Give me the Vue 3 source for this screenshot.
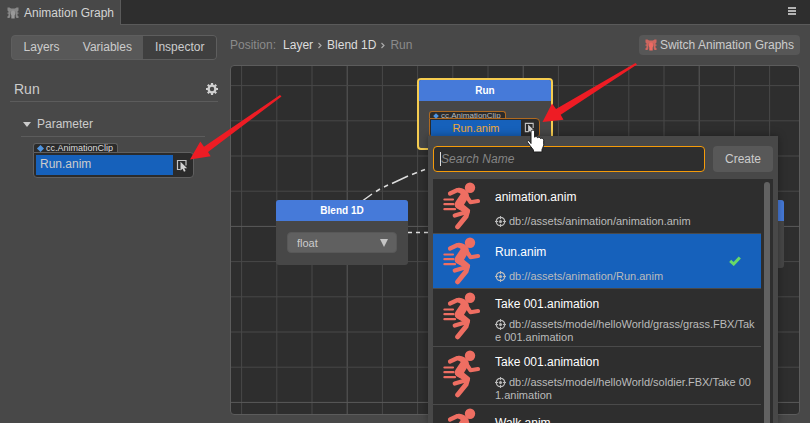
<script setup>
import { ref } from 'vue'

const tabs = ['Layers', 'Variables', 'Inspector']
const activeTab = ref('Inspector')
const search = ref('')
const param = ref('float')
const selected = ref(1)

const assets = [
  { name: 'animation.anim', path: 'db://assets/animation/animation.anim' },
  { name: 'Run.anim', path: 'db://assets/animation/Run.anim' },
  { name: 'Take 001.animation', path: 'db://assets/model/helloWorld/grass/grass.FBX/Take 001.animation' },
  { name: 'Take 001.animation', path: 'db://assets/model/helloWorld/soldier.FBX/Take 001.animation' },
  { name: 'Walk.anim', path: '' },
]

const STEP = 35.2
const columns = Array.from({ length: 60 }, (_, i) => ({ at: 10.6 + i * STEP, major: i % 5 === 3 }))
const rows = Array.from({ length: 40 }, (_, i) => ({ at: 19.6 + i * STEP, major: i % 5 === 4 }))
</script>

<template>
  <div class="panel">
    <svg class="defs" width="0" height="0" aria-hidden="true">
      <symbol id="graph-icon" viewBox="0 0 12 12">
        <path d="M.5 .5h2l1.500 1h4l1.500-1h2v3l-1 1v1h1v1.200h-1v1.800l1 .8v1.700h-2l-.8-1.500V6L8 4H4L3.300 6v3.500L2.500 11h-2V9.300l1-.8V6.700h-1V5.500h1v-1l-1-1z" fill="currentColor" opacity=".8" />
        <circle cx="6" cy="6" r="2.500" fill="currentColor" />
        <path d="M4.300 7.500h3.400V11.500H4.300z" fill="currentColor" />
      </symbol>
      <symbol id="picker" viewBox="0 0 12 13">
        <path d="M4.500 10.500H1.500V1.500h8.500v5" fill="none" stroke="#c4c4c4" stroke-width="1.200" />
        <path d="M4.500 2.800v8.700l2-1.700 1.500 3 1.600-.8-1.400-2.800h3z" fill="#d2d2d2" />
      </symbol>
      <symbol id="runner" viewBox="0 0 38 48">
        <circle cx="27" cy="5.800" r="5.200" fill="#ee6e62" />
        <g fill="none" stroke="#ee6e62" stroke-linecap="round" stroke-linejoin="round">
          <path d="M7 11.500L14.500 8l6 2.500" stroke-width="4.200" />
          <path d="M23 13.500l4.500 6.700 7.500-1.200" stroke-width="4.200" />
          <path d="M15 23.500l9.500 6-1.500 5L14.700 44.800" stroke-width="5" />
          <path d="M22 30.500l-10.200 3" stroke-width="4.400" />
          <path d="M1.400 17.500H10M1.400 22.200H10.500M1.400 27.200H12" stroke-width="2.200" />
        </g>
        <path d="M14.500 6c4-1 8.500 1.500 10.500 4.500 1.500 2.600 1 5-1 7.300l-3 5 5.500 4.500c2 2-1 4.500-3 4.500l-10-5.500c-2.300-2-2.300-4.500-.8-6.800l5-7.500z" fill="#ee6e62" />
      </symbol>
    </svg>

    <header class="titlebar">
      <div class="title-tab">
        <svg class="icon12"><use href="#graph-icon" /></svg>
        <span>Animation Graph</span>
      </div>
      <div class="title-rest">
        <button class="menu" aria-label="Panel menu">
          <svg width="8" height="8" viewBox="0 0 8 8"><path d="M0 1h8M0 4h8M0 7h8" stroke="#b4b4b4" stroke-width="2" /></svg>
        </button>
      </div>
    </header>

    <div class="body">
      <aside class="side">
        <nav class="segments">
          <button v-for="t in tabs" :key="t" :class="{ active: t === activeTab }" @click="activeTab = t">{{ t }}</button>
        </nav>
        <div class="side-title">
          <span>Run</span>
          <button class="gear" aria-label="Settings">
            <svg width="12" height="12" viewBox="0 0 12 12">
              <circle cx="6" cy="6" r="3.400" fill="none" stroke="#d0d0d0" stroke-width="2.300" />
              <path d="M6 0v2M6 10v2M0 6h2M10 6h2M1.800 1.800l1.400 1.400M8.800 8.800l1.400 1.400M1.800 10.200l1.400-1.400M8.800 3.200l1.400-1.400" stroke="#d0d0d0" stroke-width="2.200" />
            </svg>
          </button>
        </div>
        <section class="group">
          <h2>
            <svg width="8" height="5" viewBox="0 0 8 5"><path d="M0 0h8L4 5z" fill="#ccc" /></svg>
            Parameter
          </h2>
          <div class="asset">
            <span class="tag"><i></i>cc.AnimationClip</span>
            <div class="slot">
              <button class="value">Run.anim</button>
              <button class="pick" aria-label="Pick asset"><svg width="12" height="13"><use href="#picker" /></svg></button>
            </div>
          </div>
        </section>
      </aside>

      <main class="main">
        <div class="toolbar">
          <nav class="crumbs">
            <span class="dim">Position:</span>
            <a href="#layer">Layer</a>
            <svg width="4" height="8" viewBox="0 0 4 8"><path d="M.5 2l2.500 2.500L.5 7" fill="none" stroke="#aaa" stroke-width="1.200" /></svg>
            <a href="#blend">Blend 1D</a>
            <svg width="4" height="8" viewBox="0 0 4 8"><path d="M.5 2l2.500 2.500L.5 7" fill="none" stroke="#aaa" stroke-width="1.200" /></svg>
            <span class="dim">Run</span>
          </nav>
          <button class="switch">
            <svg class="icon12"><use href="#graph-icon" /></svg>
            Switch Animation Graphs
          </button>
        </div>

        <div class="canvas">
          <svg class="grid" aria-hidden="true">
            <line v-for="c in columns" :key="'c' + c.at" :x1="c.at" :x2="c.at" y1="0" y2="100%" :class="{ major: c.major }" />
            <line v-for="r in rows" :key="'r' + r.at" :y1="r.at" :y2="r.at" x1="0" x2="100%" :class="{ major: r.major }" />
            <path class="wire" d="M132 134.500l9-6.500M145 125.500l4-2.500M153 121l4-2M161 117.500l16-7.500M181 108.500l5-2M190 105l4-1.500" />
            <path class="wire" d="M177 166.500h4M185 166.500h4M193 166.500h6" />
          </svg>

          <article class="node blend">
            <h3>Blend 1D</h3>
            <div class="select">
              <select v-model="param" aria-label="Blend parameter"><option>float</option></select>
              <svg width="8" height="8" viewBox="0 0 8 8"><path d="M0 0h8L4 8z" fill="#c4c4c4" /></svg>
            </div>
          </article>

          <article class="node far"><h3></h3></article>

          <article class="node run">
            <h3>Run</h3>
            <div class="asset focused">
              <span class="tag"><i></i>cc.AnimationClip</span>
              <div class="slot">
                <button class="value">Run.anim</button>
                <button class="pick" aria-label="Pick clip"><svg width="11" height="12" viewBox="0 0 12 13"><use href="#picker" /></svg></button>
              </div>
            </div>
          </article>
        </div>
      </main>
    </div>

    <div class="popup">
      <div class="searchbar">
        <input v-model="search" type="text" placeholder="Search Name" aria-label="Search Name" autofocus />
        <i class="caret"></i>
        <button>Create</button>
      </div>
      <div class="results">
        <ul>
          <li v-for="(a, i) in assets" :key="i">
            <button :class="{ selected: i === selected }" @click="selected = i">
              <svg class="runner"><use href="#runner" /></svg>
              <span class="info">
                <span class="name">{{ a.name }}</span>
                <span class="path"><svg class="target" viewBox="0 0 11 11"><circle cx="5.500" cy="5.500" r="4.200" fill="none" stroke="#bbb" stroke-width="1.300" /><circle cx="5.500" cy="5.500" r="1.500" fill="#bbb" /><path d="M5.500 0v3.200M5.500 7.800V11M0 5.500h3.200M7.800 5.500H11" stroke="#bbb" stroke-width="1" /></svg>{{ a.path }}</span>
              </span>
              <svg v-if="i === selected" class="check" viewBox="0 0 12 10"><path d="M1.200 4.800l3.500 3.200L10.800 1.500" fill="none" stroke="#68d968" stroke-width="3" /></svg>
            </button>
          </li>
        </ul>
        <div class="scroll"></div>
      </div>
    </div>

    <svg class="overlay" aria-hidden="true">
      <path fill="#ee1c24" d="M190 159.500L200.300 141.500 204 146.700 280 95 281.500 96.500 208 152 210.700 156.200z" />
      <path fill="#ee1c24" d="M542.500 122L552 103.500 556 109 635.500 63 637 64.500 560.700 114.700 563.500 119.700z" />
      <path fill="#fff" stroke="#1c1c1c" stroke-width="1" stroke-linejoin="round" d="M531 143.500v-11.500c0-2.500 3.600-2.500 3.600 0v5.200c.6-1 2.700-.8 3 .5.800-.8 2.500-.5 2.900.8 1.200-.8 3.200.1 3.200 1.800v4.200c0 2-1.200 3.300-1.700 5v2.500h-8.600v-2l-5.600-7.300c-1.500-2.500 1-3.500 3.200.8z" />
    </svg>
  </div>
</template>

<style>
body { margin: 0; background: #484848; }
</style>

<style scoped>
* { box-sizing: border-box; }
.panel {
  position: relative;
  display: flex;
  flex-direction: column;
  height: 100vh;
  overflow: hidden;
  background: #484848;
  color: #ccc;
  font: 12px/16px "Liberation Sans", Arial, sans-serif;
}
button, input, select { font: inherit; color: inherit; border: 0; margin: 0; padding: 0; background: none; }
.defs { position: absolute; }
svg { display: block; flex: none; }
.icon12 { width: 12px; height: 12px; }

.titlebar { display: flex; height: 25px; flex: none; }
.title-tab { display: flex; align-items: center; gap: 5px; padding: 0 6px 0 7px; }
.title-tab svg { color: #999; }
.title-tab span { color: #d4d4d4; }
.title-rest {
  flex: 1;
  display: flex;
  align-items: center;
  justify-content: flex-end;
  padding: 0 14px 2px 0;
  background: #2e2e2e;
  border-left: 1px solid #5a5a5a;
  border-bottom: 1px solid #5a5a5a;
}

.body { flex: 1; display: flex; gap: 12px; min-height: 0; padding: 10px 10px 8px; }
.side { width: 208px; flex: none; }
.segments {
  display: flex;
  width: 206px;
  height: 25px;
  margin-left: 1px;
  border: 1px solid #5e5e5e;
  border-radius: 4px;
  background: #585858;
  overflow: hidden;
}
.segments button { flex: auto; padding-bottom: 1px; }
.segments .active { background: #3f3f3f; }
.side-title {
  display: flex;
  align-items: center;
  justify-content: space-between;
  height: 25px;
  margin-top: 17px;
  padding: 0 0 0 4px;
  border-bottom: 1px solid #5c5c5c;
  font-size: 14px;
}
.group { padding: 10px 13px 0 11px; }
.group h2 {
  display: flex;
  align-items: center;
  gap: 6px;
  height: 25px;
  margin: 0;
  padding-left: 2px;
  border-bottom: 1px solid #5c5c5c;
  font-size: 12px;
  font-weight: 400;
}
.group .asset { margin: 6px 0 0 12px; width: 161px; }

.asset { display: flex; flex-direction: column; align-items: flex-start; }
.tag {
  display: flex;
  align-items: center;
  gap: 3px;
  height: 9px;
  padding: 1px 4px 0;
  border: 1px solid #606060;
  border-bottom: 0;
  border-radius: 3px 3px 0 0;
  background: #2b2b2b;
  color: #ddd;
  font-size: 9px;
  line-height: 9px;
}
.tag i { width: 5px; height: 5px; background: #4f94e0; transform: rotate(45deg); }
.slot {
  display: flex;
  align-self: stretch;
  height: 26px;
  padding: 2px;
  border: 1px solid #606060;
  border-radius: 0 4px 4px 4px;
  background: #2b2b2b;
}
.value { flex: 1; padding: 0 0 2px 4px; background: #1661bb; text-align: left; }
.pick { display: flex; align-items: center; justify-content: center; width: 18px; }

.main { flex: 1; display: flex; flex-direction: column; gap: 10px; min-width: 0; }
.toolbar { display: flex; align-items: center; justify-content: space-between; height: 20px; }
.crumbs { display: flex; align-items: center; gap: 5px; }
.crumbs a { color: #ddd; text-decoration: none; }
.crumbs .dim { color: #8b8b8b; }
.crumbs .dim:first-child { margin-right: 2px; }
.switch { display: flex; align-items: center; gap: 3px; height: 20px; padding: 0 6px; border-radius: 4px; background: #575757; }
.switch svg { color: #ec6a62; }

.canvas {
  position: relative;
  flex: 1;
  overflow: hidden;
  border: 1px solid #5c5c5c;
  border-radius: 4px;
  background: #2e2e2e;
}
.grid { width: 100%; height: 100%; }
.grid line { stroke: #484848; stroke-width: 1; }
.grid .major { stroke: #5a5a5a; }
.wire { fill: none; stroke: #ddd; stroke-width: 1.5; }

.node { position: absolute; border-radius: 3px; background: #474747; overflow: hidden; }
.node h3 {
  height: 21px;
  margin: 0;
  background: #467ad9;
  color: #fff;
  font-size: 10px;
  font-weight: 700;
  line-height: 21px;
  text-align: center;
}
.blend { left: 45px; top: 134px; width: 132px; height: 65px; }
.far { right: 15px; top: 134px; width: 132px; height: 68px; }
.run { left: 186px; top: 12px; width: 136px; height: 72px; border: 2px solid #f5cc50; border-radius: 4px; }
.run .asset { margin: 10px 11px 0 10px; }
.select { position: relative; margin: 11px; }
.select select {
  appearance: none;
  width: 100%;
  height: 21px;
  padding: 0 9px;
  border: 1px solid #585858;
  border-radius: 4px;
  background: #606060;
  font-size: 11px;
}
.select svg { position: absolute; right: 9px; top: 7px; pointer-events: none; }

.focused .tag, .focused .slot { border-color: #b06a20; }
.focused .tag { height: 7px; gap: 3px; font-size: 8px; line-height: 8px; color: #bbb; }
.focused .tag i { width: 4px; height: 4px; }
.focused .slot { height: 20px; padding: 1px; }
.focused .value { padding: 0 0 2px; font-size: 11px; text-align: center; color: #f0a93a; }
.focused .pick { width: 17px; }

.popup {
  position: absolute;
  left: 428px;
  top: 136px;
  bottom: 0;
  width: 350px;
  display: flex;
  flex-direction: column;
  gap: 7px;
  padding: 10px 5px 0;
  background: #484848;
  box-shadow: 0 0 8px rgba(0, 0, 0, 0.35);
}
.searchbar { position: relative; display: flex; gap: 8px; height: 26px; flex: none; }
.searchbar input {
  flex: 1;
  min-width: 0;
  padding: 0 7px;
  border: 1px solid #f59b0a;
  border-radius: 4px;
  outline: 0;
  background: #2e2e2e;
  caret-color: transparent;
}
.searchbar input::placeholder { color: #858585; font-style: italic; opacity: 1; }
.caret { position: absolute; left: 7px; top: 6px; width: 1px; height: 14px; background: #ddd; }
.searchbar button { width: 60px; border-radius: 4px; background: #585858; }

.results { flex: 1; min-height: 0; display: flex; gap: 3px; padding-right: 3px; background: #2e2e2e; overflow: hidden; }
.results ul { flex: 1; min-width: 0; margin: 0; padding: 0; list-style: none; }
.results li { border-bottom: 1px solid #4a4a4a; }
.results li button {
  position: relative;
  display: flex;
  width: 100%;
  min-height: 54px;
  padding: 0 5px 0 10px;
  gap: 14px;
  text-align: left;
}
.results .selected { background: #1661bb; }
.runner { width: 38px; height: 48px; margin-top: 3px; }
.info {
  flex: 1;
  min-width: 0;
  align-self: stretch;
  display: flex;
  flex-direction: column;
  justify-content: space-evenly;
  gap: 4px;
  padding: 6px 0 2px;
}
.name { color: #fff; line-height: 19px; }
.path { color: #bbb; font-size: 11px; line-height: 13px; word-break: break-all; }
.target { display: inline-block; width: 11px; height: 11px; margin-right: 3px; vertical-align: -2px; }
.check { position: absolute; right: 20px; top: 22px; width: 12px; height: 10px; }
.scroll { width: 6px; margin-top: 3px; border-radius: 3px 3px 0 0; background: #626262; }

.overlay { position: absolute; left: 0; top: 0; width: 100%; height: 100%; pointer-events: none; }
</style>
